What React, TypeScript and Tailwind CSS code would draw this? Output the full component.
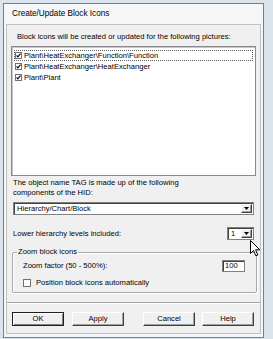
import React from "react";

const items = [
    "Plant\\HeatExchanger\\Function\\Function",
    "Plant\\HeatExchanger\\HeatExchanger",
    "Plant\\Plant",
];

const Check = (props: { checked: boolean; size?: string }) => {
    return (
        <div className={`${props.size ?? "w-[7px] h-[7px]"} shrink-0 bg-white border border-[#707070] flex items-center justify-center`}>
            {props.checked && (
                <svg width="7" height="7" viewBox="0 0 7 7">
                    <path d="M0.8 3.4 L2.6 5.4 L6.3 1" stroke="#000" strokeWidth="1.5" fill="none" />
                </svg>
            )}
        </div>
    );
};

const Arrow = () => {
    return (
        <div className="w-[11px] h-full bg-[#f0f0f0] border-t border-l border-white border-b border-r border-b-[#404040] border-r-[#404040] shadow-[inset_-1px_-1px_0_#a0a0a0] flex items-center justify-center">
            <svg width="5" height="3" viewBox="0 0 5 3">
                <path d="M0 0 H5 L2.5 3 Z" fill="#000" />
            </svg>
        </div>
    );
};

const Button = (props: { label: string; className?: string; primary?: boolean }) => {
    return (
        <div
            className={`w-[52px] h-[14px] flex items-center justify-center bg-[#f0f0f0] ${
                props.primary
                    ? "border border-[#202020] shadow-[inset_1px_1px_0_#fff,inset_-1px_-1px_0_#808080]"
                    : "border-t border-l border-t-white border-l-white border-b border-r border-b-[#404040] border-r-[#404040] shadow-[inset_-1px_-1px_0_#a0a0a0]"
            } ${props.className ?? ""}`}
        >
            {props.label}
        </div>
    );
};

export default function App() {
    return (
        <div
            className="relative w-[273px] h-[339px] overflow-hidden bg-[#dbe3ec] pt-[3px] pl-[3px] text-[7.6px] leading-[10px] text-black"
            style={{ fontFamily: '"Liberation Sans", Arial, sans-serif' }}
        >
            <div className="w-[261px] h-[335px] border border-[#7d7d7d] bg-[#f5f6f7] flex flex-col">
                {/* title */}
                <div className="h-[20px] flex items-center pl-[8px] text-[8.2px]">Create/Update Block Icons</div>
                {/* client */}
                <div className="flex-1 mx-[2px] mb-[3px] border border-[#c2c2c2] bg-[#f0f0f0] flex flex-col">
                    <div className="mt-[7px] pl-[10px]">Block icons will be created or updated for the following pictures:</div>
                    <div className="mt-[4px] ml-[4px] w-[245px] h-[130px] bg-white border border-[#8a8a8a] shadow-[inset_1px_1px_0_#c8c8c8] pt-[3px] pl-[2px] pr-[2px] flex flex-col">
                        {items.map((item, i) => (
                            <div
                                key={item}
                                className={`h-[11px] flex items-center gap-[2px] pl-[1px] ${i === 0 ? "outline outline-1 outline-dotted outline-[#606060] -outline-offset-1" : ""}`}
                            >
                                <Check checked={true} />
                                <span>{item}</span>
                            </div>
                        ))}
                    </div>
                    <div className="mt-[2px] ml-[6px]">
                        <div>The object name TAG is made up of the following</div>
                        <div>components of the HID:</div>
                    </div>
                    <div className="mt-[4px] ml-[6px] w-[241px] h-[13px] bg-white border border-[#808080] shadow-[inset_1px_1px_0_#404040] flex items-center justify-between pl-[2px] p-[1px]">
                        <span className="pl-[1px]">Hierarchy/Chart/Block</span>
                        <Arrow />
                    </div>
                    <div className="mt-[12px] ml-[6px] w-[241px] flex items-center justify-between">
                        <span>Lower hierarchy levels included:</span>
                        <div className="w-[27px] h-[13px] bg-white border border-[#808080] shadow-[inset_1px_1px_0_#404040] flex items-center justify-between p-[1px]">
                            <span className="pl-[2px]">1</span>
                            <Arrow />
                        </div>
                    </div>
                    <fieldset className="mt-[7px] ml-[5px] w-[245px] h-[46px] border border-[#a8a8a8] shadow-[inset_1px_1px_0_#fff,1px_1px_0_#fff] rounded-[2px] px-[10px]">
                        <legend className="ml-[-6px] px-[1px]">Zoom block icons</legend>
                        <div className="mt-[3px] flex items-center justify-between pr-[1px]">
                            <span>Zoom factor (50 - 500%):</span>
                            <div className="w-[23px] h-[12px] bg-white border border-[#808080] shadow-[inset_1px_1px_0_#404040] flex items-center pl-[2px]">
                                100
                            </div>
                        </div>
                        <div className="mt-[6px] flex items-center gap-[5px]">
                            <Check checked={false} size="w-[8px] h-[8px]" />
                            <span>Position block icons automatically</span>
                        </div>
                    </fieldset>
                    <div className="mt-[9px] h-[2px] border-t border-[#a0a0a0] border-b border-b-white" />
                    <div className="mt-[8px] ml-[5px] flex">
                        <Button label="OK" primary />
                        <Button label="Apply" className="ml-[8px]" />
                        <Button label="Cancel" className="ml-[19px]" />
                        <Button label="Help" className="ml-[7px]" />
                    </div>
                </div>
            </div>
            {/* mouse pointer */}
            <svg className="absolute left-[250px] top-[240px]" width="11" height="17" viewBox="0 0 11 17">
                <path d="M0.5 0.5 V13.5 L3.5 10.5 L5.8 15.8 L7.8 15 L5.6 9.8 H9.8 Z" fill="#fff" stroke="#000" strokeWidth="1" strokeLinejoin="round" />
            </svg>
        </div>
    );
}
